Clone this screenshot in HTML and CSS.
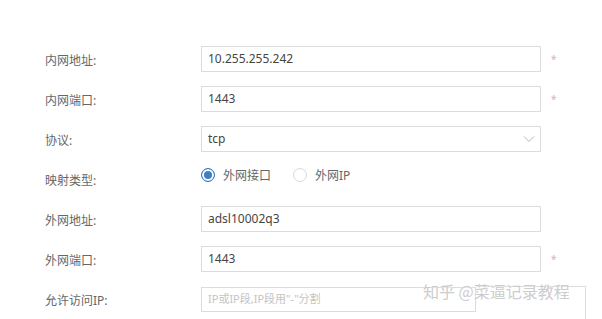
FILE: index.html
```html
<!DOCTYPE html>
<html lang="zh-CN">
<head>
  <meta charset="UTF-8" />
  <title>端口映射</title>
  <link rel="stylesheet" href="styles.css">
</head>
<body>
  <form class="form">
    <div class="row">
      <label>内网地址:</label>
      <div class="field">10.255.255.242</div>
      <span class="req">*</span>
    </div>
    <div class="row">
      <label>内网端口:</label>
      <div class="field">1443</div>
      <span class="req">*</span>
    </div>
    <div class="row">
      <label>协议:</label>
      <div class="field select">
        <span>tcp</span>
        <svg width="12" height="8" viewBox="0 0 12 8"><path d="M1 1.5 L6 6.5 L11 1.5" fill="none" stroke="#b4b4b4" stroke-width="1"/></svg>
      </div>
    </div>
    <div class="row">
      <label>映射类型:</label>
      <div class="radios">
        <span class="radio on"><i></i>外网接口</span>
        <span class="radio"><i></i>外网IP</span>
      </div>
    </div>
    <div class="row">
      <label>外网地址:</label>
      <div class="field">adsl10002q3</div>
    </div>
    <div class="row">
      <label>外网端口:</label>
      <div class="field">1443</div>
      <span class="req">*</span>
    </div>
    <div class="row">
      <label>允许访问IP:</label>
      <div class="field short placeholder">IP或IP段,IP段用"-"分割</div>
    </div>
  </form>
  <div class="mark-box"></div>
  <div class="mark">知乎 @菜逼记录教程</div>
</body>
</html>
```
FILE: styles.css
```css
body { margin:0; background:#fff; font-family:"Noto Sans", "Noto Sans CJK SC", sans-serif; color:#333; }
.form { display:flex; flex-direction:column; gap:14px; padding:46px 0 0 45px; }
.row { display:flex; align-items:center; height:26px; }
.row label { width:156px; font-size:12px; color:#666; padding-top:1px; }
.field { box-sizing:border-box; width:340px; height:26px; border:1px solid #dcdcdc; padding:0 6px; font-size:12px; line-height:24px; color:#444; display:flex; align-items:center; }
.field.short { width:275px; height:25px; }
.placeholder { color:#c4c4c4; font-size:11px; }
.select { justify-content:space-between; padding-right:5px; }
.req { margin-left:10px; color:#eaa8a8; font-size:10px; }
.radios { display:flex; gap:22px; align-self:flex-start; font-size:12px; color:#666; }
.radio { display:flex; align-items:center; gap:8px; }
.radio i { box-sizing:border-box; width:14px; height:14px; border-radius:50%; border:1px solid #dadada; background:#fff; }
.radio.on i { border-color:#3d7fc1; background:#3d7fc1; box-shadow:inset 0 0 0 2px #fff; }
.mark-box { position:absolute; left:476px; top:286px; width:110px; height:40px; box-sizing:border-box; border-top:1px solid #dcdcdc; border-right:1px solid #dcdcdc; }
.mark { position:absolute; left:423px; top:280px; white-space:nowrap; font-family:"Noto Sans CJK SC", sans-serif; font-size:16px; line-height:22px; color:#cdcdcd; text-shadow:0 0 2px #fff; }
```
